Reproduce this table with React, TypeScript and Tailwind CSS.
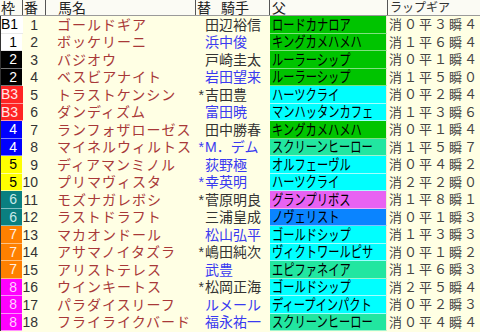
import React from "react";

type Row = {
  f: number;
  label: string;
  num: number;
  name: string;
  star: boolean;
  jockey: string;
  blue: boolean;
  sire: string;
  sc: string;
  gear: string;
};

const rows: Row[] = [
  { f: 1, label: "B1", num: 1, name: "ゴールドギア", star: false, jockey: "田辺裕信", blue: false, sire: "ロードカナロア", sc: "g", gear: "消０平３瞬４" },
  { f: 1, label: "1", num: 2, name: "ボッケリーニ", star: false, jockey: "浜中俊", blue: true, sire: "キングカメハメハ", sc: "g", gear: "消１平６瞬４" },
  { f: 2, label: "2", num: 3, name: "バジオウ", star: false, jockey: "戸崎圭太", blue: false, sire: "ルーラーシップ", sc: "g", gear: "消０平１瞬４" },
  { f: 2, label: "2", num: 4, name: "ベスビアナイト", star: false, jockey: "岩田望来", blue: true, sire: "ルーラーシップ", sc: "g", gear: "消１平５瞬０" },
  { f: 3, label: "B3", num: 5, name: "トラストケンシン", star: true, jockey: "吉田豊", blue: false, sire: "ハーツクライ", sc: "c", gear: "消０平２瞬４" },
  { f: 3, label: "B3", num: 6, name: "ダンディズム", star: false, jockey: "富田暁", blue: true, sire: "マンハッタンカフェ", sc: "c", gear: "消１平３瞬６" },
  { f: 4, label: "4", num: 7, name: "ランフォザローゼス", star: false, jockey: "田中勝春", blue: false, sire: "キングカメハメハ", sc: "g", gear: "消０平１瞬４" },
  { f: 4, label: "4", num: 8, name: "マイネルウィルトス", star: true, jockey: "M．デム", blue: true, sire: "スクリーンヒーロー", sc: "s", gear: "消１平５瞬７" },
  { f: 5, label: "5", num: 9, name: "ディアマンミノル", star: false, jockey: "荻野極", blue: true, sire: "オルフェーヴル", sc: "c", gear: "消０平４瞬２" },
  { f: 5, label: "5", num: 10, name: "プリマヴィスタ", star: true, jockey: "幸英明", blue: true, sire: "ハーツクライ", sc: "c", gear: "消２平２瞬０" },
  { f: 6, label: "6", num: 11, name: "モズナガレボシ", star: true, jockey: "菅原明良", blue: false, sire: "グランプリボス", sc: "m", gear: "消１平８瞬１" },
  { f: 6, label: "6", num: 12, name: "ラストドラフト", star: false, jockey: "三浦皇成", blue: false, sire: "ノヴェリスト", sc: "b", gear: "消０平１瞬３" },
  { f: 7, label: "7", num: 13, name: "マカオンドール", star: false, jockey: "松山弘平", blue: true, sire: "ゴールドシップ", sc: "c", gear: "消１平３瞬３" },
  { f: 7, label: "7", num: 14, name: "アサマノイタズラ", star: true, jockey: "嶋田純次", blue: false, sire: "ヴィクトワールピサ", sc: "c", gear: "消０平１瞬２" },
  { f: 7, label: "7", num: 15, name: "アリストテレス", star: false, jockey: "武豊", blue: true, sire: "エピファネイア", sc: "s", gear: "消１平６瞬３" },
  { f: 8, label: "8", num: 16, name: "ウインキートス", star: true, jockey: "松岡正海", blue: false, sire: "ゴールドシップ", sc: "c", gear: "消２平５瞬４" },
  { f: 8, label: "8", num: 17, name: "パラダイスリーフ", star: false, jockey: "ルメール", blue: true, sire: "ディープインパクト", sc: "c", gear: "消０平２瞬３" },
  { f: 8, label: "8", num: 18, name: "フライライクバード", star: false, jockey: "福永祐一", blue: true, sire: "スクリーンヒーロー", sc: "s", gear: "消０平４瞬４" },
];

const frameCls: Record<number, string> = {
  1: "bg-white text-black border-b-[#e8e8e8]",
  2: "bg-black text-white border-b-[#777777]",
  3: "bg-[#ff2424] text-[#ffe8e8] border-b-[#ff9a9a]",
  4: "bg-[#0000ff] text-white border-b-[#8080ff]",
  5: "bg-[#ffff00] text-black border-b-[#ffff99]",
  6: "bg-[#0a7f80] text-[#c8eaea] border-b-[#7fc0c0]",
  7: "bg-[#ff8000] text-[#fff0e0] border-b-[#ffc080]",
  8: "bg-[#ff00ff] text-[#ffd0ff] border-b-[#ff90ff]",
};

const sireCls: Record<string, string> = {
  g: "bg-[#00c400] border-b-[#80e080]",
  c: "bg-[#00ffff] border-b-[#a0ffff]",
  s: "bg-[#22e6a0] border-b-[#a0f4d0]",
  m: "bg-[#e862f2] border-b-[#f4b0f8]",
  b: "bg-[#0a84ff] border-b-[#80c0ff]",
};

export default function App() {
  return (
    <div
      className="w-[480px] h-[332px] overflow-hidden bg-[#ffffe4] text-[14px] leading-none"
      style={{ fontFamily: "'Liberation Sans', 'Noto Sans CJK JP', sans-serif" }}
    >
      <div className="flex h-[16px] bg-[#fbfbf4] border-b border-[#9a9a9a] text-[#222]">
        <div className="w-[22px] flex items-center pl-[1px]">枠</div>
        <div className="w-[23px] flex items-center pl-[1px] border-l border-[#555]">番</div>
        <div className="w-[150px] flex items-center pl-[12px] border-l border-[#555]">馬名</div>
        <div className="w-[74px] flex items-center pl-[1px] border-l border-[#555]">
          <span>替</span>
          <span className="ml-[10px]">騎手</span>
        </div>
        <div className="w-[118px] flex items-center pl-[2px] border-l border-[#555]">父</div>
        <div className="flex-1 flex items-end pb-[1px] pl-[2px] border-l border-[#555] text-[12px] text-[#333]">
          ラップギア
        </div>
      </div>
      {rows.map((r) => (
        <div key={r.num} className="flex h-[17.5px]">
          <div className="w-[22px] flex border-l border-[#333]">
            <div
              className={`flex-1 flex items-center justify-end pr-[5px] border-b ${frameCls[r.f]}`}
            >
              {r.label}
            </div>
          </div>
          <div className="w-[23px] flex items-center justify-end pr-[7px] text-[#333]">{r.num}</div>
          <div className="w-[150px] flex items-center pl-[12px] overflow-hidden whitespace-nowrap text-[#a83838] tracking-[1px]">
            {r.name}
          </div>
          <div className="w-[10px] flex items-center justify-end pr-[1px] text-[#333]">
            {r.star ? <span className={r.blue ? "text-[#3a3af0]" : "text-[#333]"}>*</span> : null}
          </div>
          <div
            className={`w-[64px] flex items-center whitespace-nowrap ${r.blue ? "text-[#3a3af0]" : "text-[#333]"}`}
          >
            {r.jockey}
          </div>
          <div className="w-[118px] flex pl-[1px]">
            <div
              className={`flex-1 flex items-center overflow-hidden whitespace-nowrap border-b border-r border-r-[#f0f0d0] pl-[2px] ${sireCls[r.sc]}`}
            >
              <span className="inline-block origin-left scale-x-[0.75] text-[15px] text-black">{r.sire}</span>
            </div>
          </div>
          <div className="flex-1 flex items-center pl-[2px] text-[13px] tracking-[2px] text-[#444] whitespace-nowrap">
            {r.gear}
          </div>
        </div>
      ))}
    </div>
  );
}
